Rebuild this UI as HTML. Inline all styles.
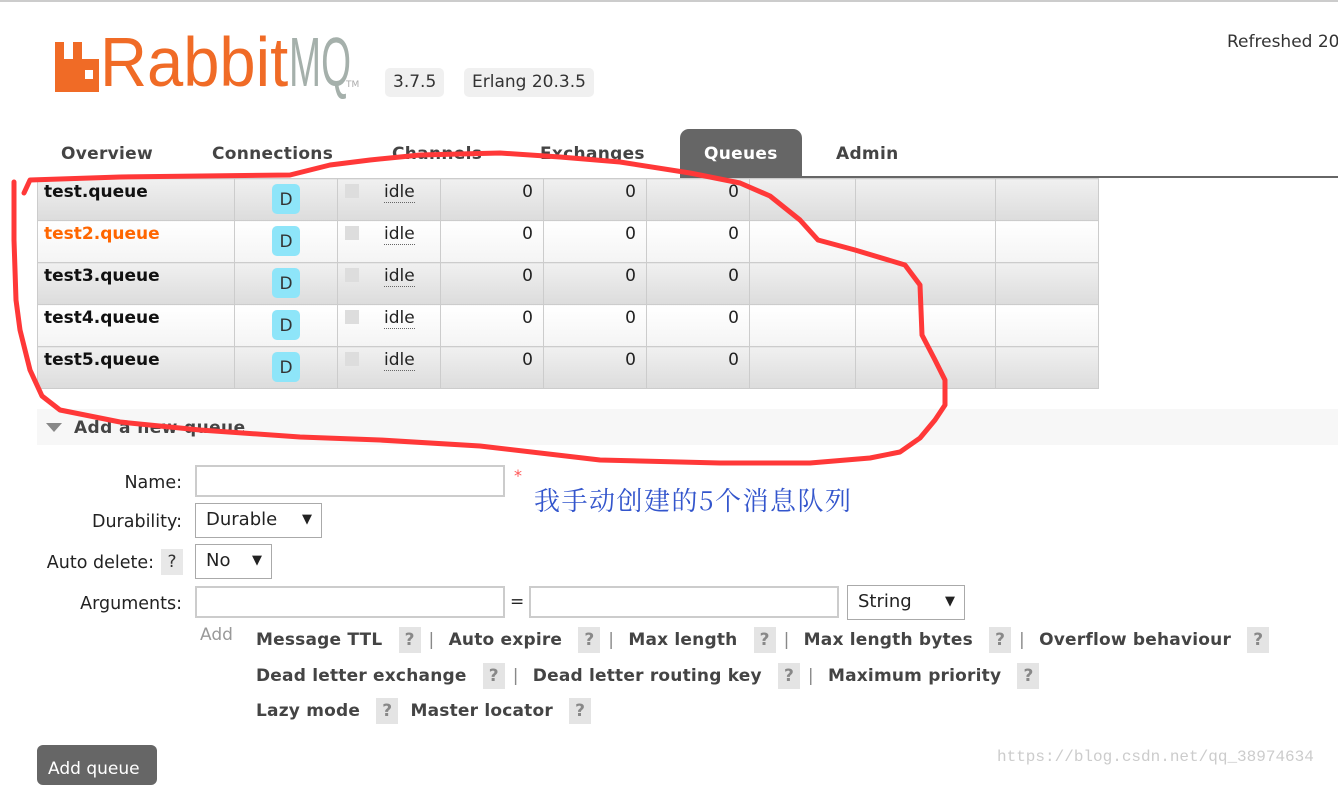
<!DOCTYPE html>
<html><head><meta charset="utf-8"><style>
*{margin:0;padding:0;box-sizing:border-box}
body{width:1338px;height:779px;overflow:hidden;background:#fff;font-family:"DejaVu Sans","Liberation Sans",sans-serif;color:#222;position:relative}
.a{position:absolute;white-space:nowrap}
.badge{background:#f0f0f0;border-radius:5px;font-size:17px;color:#333;height:29px;line-height:29px;padding:0 8px}
.nav{font-size:17px;font-weight:bold;color:#444;top:144px;letter-spacing:0.3px}
table{position:absolute;left:37px;top:178px;border-collapse:collapse}
td{border:1px solid #ccc;height:42px;font-size:17px;vertical-align:top;padding-top:3px}
tr.g td{background:linear-gradient(#f0f0f0,#dcdcdc)}
tr.w td{background:linear-gradient(#fff,#f4f4f4)}
td.n{font-weight:bold;width:197px;padding-left:6px;color:#111}
td.d{width:103px;text-align:center}
.D{display:inline-block;width:28px;height:30px;border-radius:5px;background:#8ee5f9;color:#333;line-height:32px;font-size:17px;margin-top:2px}
td.s{width:103px;position:relative}
.sq{position:absolute;left:7px;top:5px;width:14px;height:14px;background:#ddd}
.idle{position:absolute;left:46px;top:3px;border-bottom:1px dotted #666;line-height:20px}
td.z{width:103px;text-align:right;padding-right:10px}
.lbl{font-size:17.5px;color:#222;text-align:right}
.inp{position:absolute;border:2px solid #ccc;height:32px;background:#fff}
.sel{position:absolute;border:1px solid #aaa;background:#fff;font-size:18px;padding-left:10px;line-height:32px;height:35px}
.q{display:inline-block;background:#e4e4e4;color:#888;width:22px;height:26px;text-align:center;line-height:26px;font-size:17px;letter-spacing:0}
.opt{font-size:17px;font-weight:bold;color:#444;letter-spacing:0.2px}
.bar{color:#888;font-weight:normal;margin:0 8px}
</style></head><body>
<div class="a" style="left:0;top:0;width:1338px;height:2px;background:#ccc"></div>
<svg class="a" style="left:55px;top:42px" width="45" height="50" viewBox="0 0 45 50"><path d="M0 0h9v17h9V0h9v17h17v33H0z M30 28v9h8v-9z" fill="#f06b26" fill-rule="evenodd"/></svg>
<div class="a" style="left:100px;top:22px;font-family:'Liberation Sans',sans-serif;font-size:70px;transform:scaleX(0.93);transform-origin:left;color:#f06b26">Rabbit</div>
<div class="a" style="left:289px;top:22px;font-family:'Liberation Sans',sans-serif;font-size:70px;transform:scaleX(0.55);transform-origin:left;color:#a5b0ab">MQ</div>
<div class="a" style="left:346px;top:80px;font-size:9px;color:#aaa">TM</div>
<div class="a badge" style="left:385px;top:68px">3.7.5</div>
<div class="a badge" style="left:464px;top:68px">Erlang 20.3.5</div>
<div class="a" style="left:1227px;top:32px;font-size:17px;color:#333">Refreshed 20</div>
<div class="a nav" style="left:61px">Overview</div>
<div class="a nav" style="left:212px">Connections</div>
<div class="a nav" style="left:392px">Channels</div>
<div class="a nav" style="left:540px">Exchanges</div>
<div class="a" style="left:680px;top:129px;width:122px;height:49px;background:#666;border-radius:9px 9px 0 0"></div>
<div class="a nav" style="left:704px;color:#fff">Queues</div>
<div class="a nav" style="left:836px">Admin</div>
<div class="a" style="left:680px;top:176px;width:658px;height:2px;background:#666"></div>
<table>
<tr class="g"><td class="n">test.queue</td><td class="d"><span class="D">D</span></td><td class="s"><span class="sq"></span><span class="idle">idle</span></td><td class="z">0</td><td class="z">0</td><td class="z">0</td><td style="width:106px"></td><td style="width:140px"></td><td style="width:103px"></td></tr>
<tr class="w"><td class="n" style="color:#f60">test2.queue</td><td class="d"><span class="D">D</span></td><td class="s"><span class="sq"></span><span class="idle">idle</span></td><td class="z">0</td><td class="z">0</td><td class="z">0</td><td></td><td></td><td></td></tr>
<tr class="g"><td class="n">test3.queue</td><td class="d"><span class="D">D</span></td><td class="s"><span class="sq"></span><span class="idle">idle</span></td><td class="z">0</td><td class="z">0</td><td class="z">0</td><td></td><td></td><td></td></tr>
<tr class="w"><td class="n">test4.queue</td><td class="d"><span class="D">D</span></td><td class="s"><span class="sq"></span><span class="idle">idle</span></td><td class="z">0</td><td class="z">0</td><td class="z">0</td><td></td><td></td><td></td></tr>
<tr class="g"><td class="n">test5.queue</td><td class="d"><span class="D">D</span></td><td class="s"><span class="sq"></span><span class="idle">idle</span></td><td class="z">0</td><td class="z">0</td><td class="z">0</td><td></td><td></td><td></td></tr>
</table>
<div class="a" style="left:37px;top:409px;width:1301px;height:36px;background:#f7f7f7"></div>
<svg class="a" style="left:46px;top:423px" width="16" height="10"><path d="M0 0h16L8 9z" fill="#888"/></svg>
<div class="a" style="left:74px;top:418px;font-size:17px;font-weight:bold;color:#444;letter-spacing:0.4px">Add a new queue</div>

<div class="a lbl" style="left:0;width:182px;top:473px">Name:</div>
<div class="inp" style="left:195px;top:465px;width:310px"></div>
<div class="a" style="left:514px;top:466px;color:#f55;font-size:16px">*</div>
<div class="a" style="left:534px;top:481px;font-size:26px;letter-spacing:1.5px;color:#3355cc;font-family:'Noto Serif CJK SC','Noto Sans CJK SC',serif">我手动创建的5个消息队列</div>
<div class="a lbl" style="left:0;width:182px;top:512px">Durability:</div>
<div class="sel" style="left:195px;top:503px;width:127px">Durable<span style="position:absolute;right:9px;font-size:13px">▼</span></div>
<div class="a lbl" style="left:0;width:154px;top:553px">Auto delete:</div>
<div class="a q" style="left:161px;top:549px;color:#333;background:#e8e8e8">?</div>
<div class="sel" style="left:195px;top:544px;width:77px">No<span style="position:absolute;right:9px;font-size:13px">▼</span></div>
<div class="a lbl" style="left:0;width:182px;top:594px">Arguments:</div>
<div class="inp" style="left:195px;top:586px;width:310px"></div>
<div class="a" style="left:510px;top:592px;font-size:17px">=</div>
<div class="inp" style="left:529px;top:586px;width:310px"></div>
<div class="sel" style="left:847px;top:585px;width:118px">String<span style="position:absolute;right:9px;font-size:13px">▼</span></div>
<div class="a" style="left:200px;top:625px;font-size:17px;color:#999">Add</div>
<div class="a opt" style="left:256px;top:627px">Message TTL <span class="q" style="margin-left:10px">?</span><span class="bar">|</span> Auto expire <span class="q" style="margin-left:10px">?</span><span class="bar">|</span> Max length <span class="q" style="margin-left:10px">?</span><span class="bar">|</span> Max length bytes <span class="q" style="margin-left:10px">?</span><span class="bar">|</span> Overflow behaviour <span class="q" style="margin-left:10px">?</span></div>
<div class="a opt" style="left:256px;top:663px">Dead letter exchange <span class="q" style="margin-left:10px">?</span><span class="bar">|</span> Dead letter routing key <span class="q" style="margin-left:10px">?</span><span class="bar">|</span> Maximum priority <span class="q" style="margin-left:10px">?</span></div>
<div class="a opt" style="left:256px;top:698px">Lazy mode <span class="q" style="margin-left:10px">?</span> &nbsp;Master locator <span class="q" style="margin-left:10px">?</span></div>
<div class="a" style="left:37px;top:745px;width:120px;height:40px;background:#666;border-radius:6px;color:#fff;font-size:17px;padding:14px 0 0 11px">Add queue</div>
<div class="a" style="left:997px;top:748px;font-family:'Liberation Mono',monospace;font-size:16px;color:#ccc">https://blog.csdn.net/qq_38974634</div>
<svg class="a" style="left:0;top:0" width="1338" height="779"><path d="M24 193 L30 180 L120 177 L290 175 L330 165 L370 160 L420 155 L500 153 L560 157 L620 162 L690 173 L740 183 L770 196 L800 220 L818 240 L855 250 L905 265 L920 285 L922 335 L935 360 L945 380 L945 405 L935 420 L920 438 L900 452 L870 458 L810 463 L720 463 L600 460 L480 446 L380 440 L300 437 L200 430 L120 422 L60 410 L42 396 L30 370 L20 330 L16 300 L14 240 L14 182" fill="none" stroke="#ff3838" stroke-width="5" stroke-linejoin="round" stroke-linecap="round"/></svg>
</body></html>
